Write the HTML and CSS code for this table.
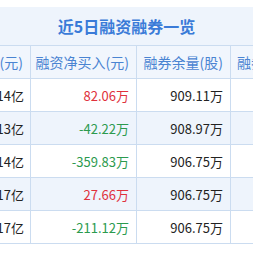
FILE: index.html
```html
<!DOCTYPE html>
<html lang="zh-CN">
<head>
<meta charset="utf-8">
<link rel="stylesheet" href="styles.css">
</head>
<body>
<div class="page">
  <div class="title">近5日融资融券一览</div>
  <div class="viewport">
    <div class="grid">
      <div class="cell head">融资余额(元)</div>
      <div class="cell head">融资净买入(元)</div>
      <div class="cell head">融券余量(股)</div>
      <div class="cell head left">融券余额(元)</div>

      <div class="cell first">17.14亿</div>
      <div class="cell up">82.06万</div>
      <div class="cell">909.11万</div>
      <div class="cell"></div>

      <div class="cell first alt">17.13亿</div>
      <div class="cell alt down">-42.22万</div>
      <div class="cell alt">908.97万</div>
      <div class="cell alt"></div>

      <div class="cell first">17.14亿</div>
      <div class="cell down">-359.83万</div>
      <div class="cell">906.75万</div>
      <div class="cell"></div>

      <div class="cell first alt">17.17亿</div>
      <div class="cell alt up">27.66万</div>
      <div class="cell alt">906.75万</div>
      <div class="cell alt"></div>

      <div class="cell first">17.17亿</div>
      <div class="cell down">-211.12万</div>
      <div class="cell">906.75万</div>
      <div class="cell"></div>
    </div>
  </div>
</div>
</body>
</html>
```

FILE: styles.css
```css
html, body {
  margin: 0;
  padding: 0;
  background: #ffffff;
}

body {
  font-family: "Noto Sans CJK SC", "Noto Sans", sans-serif;
  width: 253px;
  height: 253px;
  overflow: hidden;
}

.page {
  padding-top: 7px;
}

.title {
  box-sizing: border-box;
  height: 39px;
  display: flex;
  align-items: center;
  justify-content: center;
  background: #eef4fc;
  border-bottom: 1px solid #cbdcf0;
  color: #3a7bd8;
  font-size: 16px;
  font-weight: bold;
  line-height: 1;
}

.viewport {
  overflow: hidden;
  width: 253px;
}

.grid {
  display: grid;
  grid-template-columns: 107px 106px 94px 100px;
  margin-left: -76px;
}

.cell {
  box-sizing: border-box;
  height: 33px;
  border-right: 1px solid #cbdcf0;
  border-bottom: 1px solid #cbdcf0;
  display: flex;
  align-items: center;
  justify-content: flex-end;
  padding-right: 7px;
  white-space: nowrap;
  font-size: 13px;
  color: #222222;
  background: #ffffff;
}

.cell.first {
  padding-right: 6px;
}

.head {
  background: #f1f6fd;
  color: #4a84d2;
  font-size: 14px;
}

.head.left {
  justify-content: flex-start;
  padding-left: 6px;
}

.alt {
  background: #eef4fc;
}

.up {
  color: #e0313c;
}

.down {
  color: #2b9a4e;
}
```
